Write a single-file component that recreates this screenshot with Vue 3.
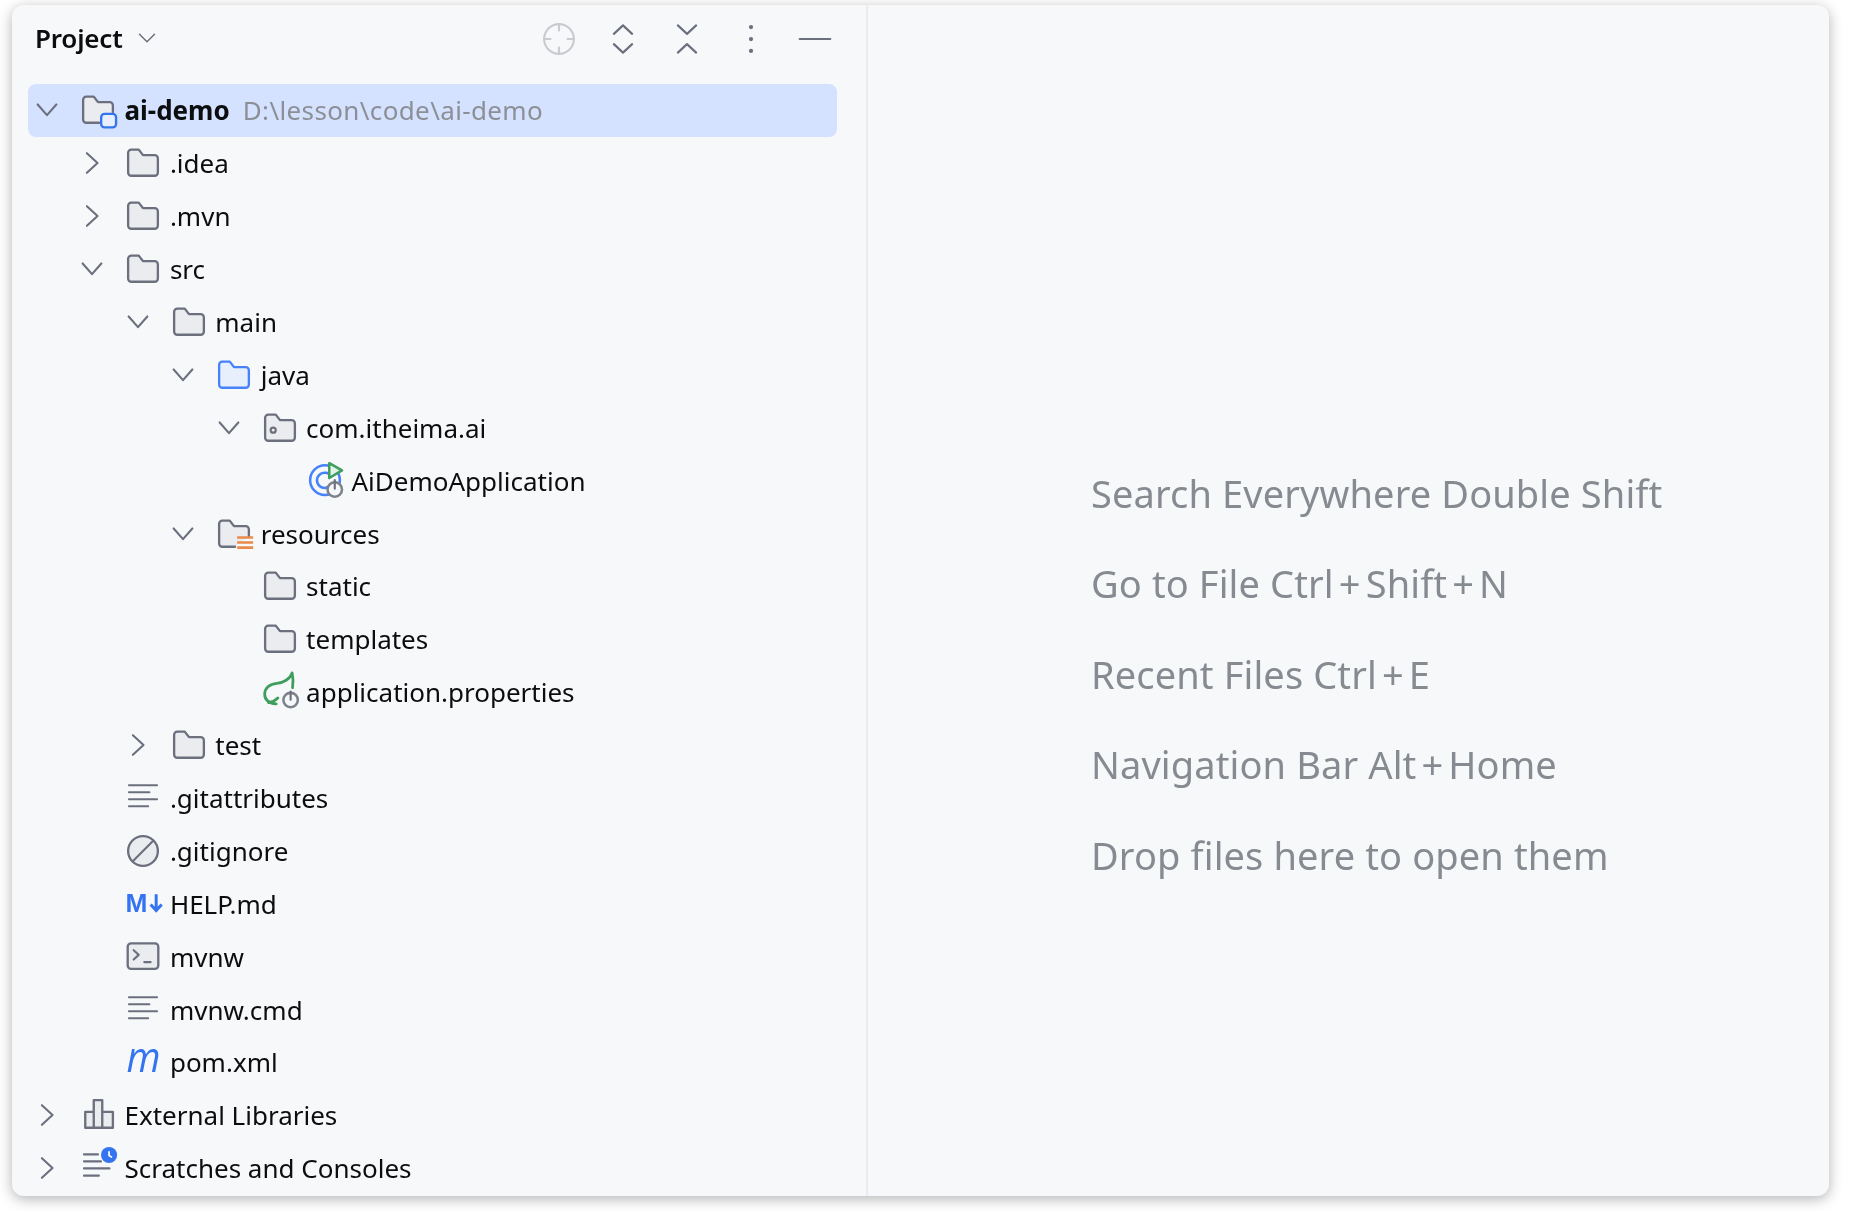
<script setup>
const rows = [
  { label: 'ai-demo', hint: 'D:\\lesson\\code\\ai-demo', depth: 0, open: true, icon: 'root', selected: true },
  { label: '.idea', depth: 1, open: false, icon: 'folder' },
  { label: '.mvn', depth: 1, open: false, icon: 'folder' },
  { label: 'src', depth: 1, open: true, icon: 'folder' },
  { label: 'main', depth: 2, open: true, icon: 'folder' },
  { label: 'java', depth: 3, open: true, icon: 'source' },
  { label: 'com.itheima.ai', depth: 4, open: true, icon: 'package' },
  { label: 'AiDemoApplication', depth: 5, icon: 'spring' },
  { label: 'resources', depth: 3, open: true, icon: 'resources' },
  { label: 'static', depth: 4, icon: 'folder' },
  { label: 'templates', depth: 4, icon: 'folder' },
  { label: 'application.properties', depth: 4, icon: 'leaf' },
  { label: 'test', depth: 2, open: false, icon: 'folder' },
  { label: '.gitattributes', depth: 1, icon: 'lines' },
  { label: '.gitignore', depth: 1, icon: 'ignore' },
  { label: 'HELP.md', depth: 1, icon: 'markdown' },
  { label: 'mvnw', depth: 1, icon: 'terminal' },
  { label: 'mvnw.cmd', depth: 1, icon: 'lines' },
  { label: 'pom.xml', depth: 1, icon: 'maven' },
  { label: 'External Libraries', depth: 0, open: false, icon: 'libraries' },
  { label: 'Scratches and Consoles', depth: 0, open: false, icon: 'scratches' },
];

const hints = [
  ['Search Everywhere Double Shift'],
  ['Go to File Ctrl', 'Shift', 'N'],
  ['Recent Files Ctrl', 'E'],
  ['Navigation Bar Alt', 'Home'],
  ['Drop files here to open them'],
];

const FOLDER = 'M1 3.2A1.5 1.5 0 0 1 2.5 1.7H6l2 2.6h5.5A1.5 1.5 0 0 1 15 5.8v6.7a1.5 1.5 0 0 1-1.5 1.5h-11A1.5 1.5 0 0 1 1 12.5z';
const FOLDER_CUT = 'M8.5 14h-6A1.5 1.5 0 0 1 1 12.5V3.2a1.5 1.5 0 0 1 1.5-1.5H6l2 2.6h5.5A1.5 1.5 0 0 1 15 5.8V9';
</script>

<template>
  <div class="page">
    <div class="window">
      <aside class="panel">
        <header class="panel__head">
          <div class="panel__title">
            <span>Project</span>
            <svg class="chevron-small" viewBox="0 0 16 16">
              <polyline class="line" points="3,5.5 8,10.5 13,5.5" />
            </svg>
          </div>
          <div class="panel__tools">
            <svg class="icon" viewBox="0 0 16 16">
              <circle class="line line--off" cx="8" cy="8" r="7" />
              <path class="line line--off" d="M8 1v3M8 12v3M1 8h3M12 8h3" />
            </svg>
            <svg class="icon" viewBox="0 0 16 16">
              <path class="line" d="M3.7 5.6 8 1.6l4.3 4M3.7 10.4 8 14.4l4.3-4" />
            </svg>
            <svg class="icon" viewBox="0 0 16 16">
              <path class="line" d="M3.7 1.6 8 5.6l4.3-4M3.7 14.4 8 10.4l4.3 4" />
            </svg>
            <svg class="icon" viewBox="0 0 16 16">
              <circle class="dot" cx="8" cy="2.4" r="1" />
              <circle class="dot" cx="8" cy="8" r="1" />
              <circle class="dot" cx="8" cy="13.6" r="1" />
            </svg>
            <svg class="icon" viewBox="0 0 16 16">
              <path class="line" d="M.8 8h14.4" />
            </svg>
          </div>
        </header>

        <div class="tree">
          <div
            v-for="row in rows"
            :key="row.label"
            class="row"
            :class="{ 'row--selected': row.selected }"
            :style="{ paddingLeft: row.depth * 45.4 + 'px' }"
          >
            <span class="row__toggle">
              <svg v-if="row.open === true" class="icon" viewBox="0 0 16 16">
                <polyline class="line" points="3.6,5.4 8,10.4 12.4,5.4" />
              </svg>
              <svg v-else-if="row.open === false" class="icon" viewBox="0 0 16 16">
                <polyline class="line" points="5.6,3.4 10.6,8 5.6,12.6" />
              </svg>
            </span>

            <svg class="icon row__icon" viewBox="0 0 16 16">
              <path v-if="row.icon === 'folder'" class="shape" :d="FOLDER" />

              <template v-else-if="row.icon === 'root'">
                <path class="shape" :d="FOLDER_CUT" />
                <rect class="blue-box" x="9.5" y="9.8" width="7" height="6.4" rx="1.6" />
              </template>

              <path v-else-if="row.icon === 'source'" class="shape shape--blue" :d="FOLDER" />

              <template v-else-if="row.icon === 'package'">
                <path class="shape" :d="FOLDER" />
                <circle class="line" cx="4.8" cy="9" r="1.2" />
              </template>

              <template v-else-if="row.icon === 'resources'">
                <path class="shape" :d="FOLDER_CUT" />
                <path class="orange" d="M9.5 9.6H17M9.5 12H17M9.5 14.4H17" />
              </template>

              <template v-else-if="row.icon === 'spring'">
                <circle class="ring" cx="8" cy="7.6" r="7" />
                <path class="ring" d="M11 6a3.6 3.6 0 1 0 0 3.4" />
                <path class="play" d="M10 -.4 16 3l-6 3.6z" />
                <circle class="power" cx="12.6" cy="12" r="3.4" />
                <path class="line" d="M12.6 7.6v4" />
              </template>

              <template v-else-if="row.icon === 'leaf'">
                <path class="leaf" d="M13.7-1C12.8 2 9.5 3.6 6.5 3.9 3 4.2.8 6.3.8 9c0 2.8 2 4.2 5.4 4.6M13.7-1c.5 2.2.6 4.6.2 7M2.6 13c1.8-.3 3.2-1 4.4-2.2" />
                <circle class="power" cx="13" cy="11.8" r="3.4" />
                <path class="line" d="M13 7.8v3.8" />
              </template>

              <path v-else-if="row.icon === 'lines'" class="line" d="M1.4 2h13.2M1.4 5.3h9.6M1.4 8.6h13.2M1.4 11.9h9" />

              <template v-else-if="row.icon === 'ignore'">
                <circle class="shape" cx="8" cy="8" r="7" />
                <path class="line" d="M3.2 12.8 12.8 3.2" />
              </template>

              <template v-else-if="row.icon === 'markdown'">
                <text class="md-text" x="-.3" y="11.8">M</text>
                <path class="md-arrow" d="M14.2 3.4v7.6M11.6 8.2l2.6 2.9 2.6-2.9" />
              </template>

              <template v-else-if="row.icon === 'terminal'">
                <rect class="shape" x=".8" y="1.6" width="14.4" height="12" rx="1.6" />
                <path class="line" d="M3.6 4.8 6 7 3.6 9.2M8.6 10.4h3" />
              </template>

              <text v-else-if="row.icon === 'maven'" class="maven" x=".2" y="12.8" textLength="16" lengthAdjust="spacingAndGlyphs">m</text>

              <path v-else-if="row.icon === 'libraries'" class="shape" d="M2 6.5h4V14H2zM6 1h4v13H6zM10 6.5h5V14h-5z" />

              <template v-else-if="row.icon === 'scratches'">
                <path class="line" d="M1.4 1.6h6.6M1.4 4.9h8M1.4 8.2h12M1.4 11.6h7" />
                <circle class="clock" cx="13.2" cy="1.9" r="3.8" />
                <path class="clock-hand" d="M13.2 .1v2l1.4 .9" />
              </template>
            </svg>

            <span class="row__label">{{ row.label }}</span>
            <span v-if="row.hint" class="row__hint">{{ row.hint }}</span>
          </div>
        </div>
      </aside>

      <main class="empty">
        <p v-for="parts in hints" :key="parts[0]" class="empty__line">
          <template v-for="(part, i) in parts" :key="part">
            <span v-if="i > 0" class="empty__plus">+</span>{{ part }}
          </template>
        </p>
      </main>
    </div>
  </div>
</template>

<style>
html,
body {
  margin: 0;
  background: #fff;
}
</style>

<style scoped>
.page {
  height: 1212px;
  padding: 5px 20px 16px 12px;
  box-sizing: border-box;
  font-family: "Noto Sans", sans-serif;
  color: #0c0d0f;
  overflow: hidden;
}

.window {
  height: 100%;
  display: flex;
  border-radius: 12px;
  background: #f7f8fa;
  box-shadow: 0 3px 14px rgba(0, 0, 0, 0.3);
  overflow: hidden;
  filter: blur(0.4px);
}

.panel {
  width: 856px;
  flex-shrink: 0;
  box-sizing: border-box;
  padding: 0 29px 0 16px;
  border-right: 2px solid #ebecf0;
}

.panel__head {
  height: 66px;
  margin-bottom: 13px;
  padding: 0 0 0 7px;
  display: flex;
  justify-content: space-between;
  align-items: center;
}

.panel__title {
  display: flex;
  align-items: center;
  gap: 12px;
  font-size: 26px;
  font-weight: 600;
  letter-spacing: -0.2px;
}

.chevron-small {
  width: 24px;
  height: 24px;
}

.panel__tools {
  display: flex;
  align-items: center;
  gap: 30px;
  margin-right: 5px;
  padding-top: 2px;
}

.tree {
  display: flex;
  flex-direction: column;
}

.row {
  height: 52.9px;
  display: flex;
  align-items: center;
  border-radius: 8px;
  white-space: nowrap;
}

.row--selected {
  background: #d4e2ff;
}

.row__toggle {
  width: 38px;
  height: 34px;
  margin-left: 2px;
  margin-right: 13px;
  flex-shrink: 0;
}

.row__icon {
  margin-right: 9.5px;
  flex-shrink: 0;
}

.row__label {
  font-size: 26px;
}

.row--selected .row__label {
  font-weight: 700;
}

.row__hint {
  margin-left: 13px;
  font-size: 26px;
  letter-spacing: 0.37px;
  color: #8c8f96;
}

.icon {
  display: block;
  width: 34px;
  height: 34px;
  overflow: visible;
}

.line {
  fill: none;
  stroke: #6c707e;
  stroke-width: 1;
  stroke-linecap: round;
  stroke-linejoin: round;
}

.line--off {
  stroke: #c9cbd0;
}

.dot {
  fill: #6c707e;
}

.shape {
  fill: #ebecf0;
  stroke: #6c707e;
  stroke-width: 1.1;
  stroke-linejoin: round;
  stroke-linecap: round;
}

.shape--blue {
  fill: #e7effd;
  stroke: #4682fa;
}

.blue-box {
  fill: #e7effd;
  stroke: #3574f0;
  stroke-width: 1.1;
}

.orange {
  fill: none;
  stroke: #ea8a4a;
  stroke-width: 1.2;
}

.ring {
  fill: none;
  stroke: #4682fa;
  stroke-width: 1.2;
}

.play {
  fill: #e4f3e8;
  stroke: #3f9d5d;
  stroke-width: 1.2;
  stroke-linejoin: round;
}

.power {
  fill: #f7f8fa;
  stroke: #7e828c;
  stroke-width: 1.2;
}

.leaf {
  fill: none;
  stroke: #3f9d5d;
  stroke-width: 1.3;
  stroke-linecap: round;
  stroke-linejoin: round;
}

.md-text {
  fill: #3574f0;
  font-family: "Liberation Sans", sans-serif;
  font-size: 12.4px;
  font-weight: 700;
}

.md-arrow {
  fill: none;
  stroke: #3574f0;
  stroke-width: 1.4;
}

.maven {
  fill: #3574f0;
  font-family: "Open Sans", sans-serif;
  font-size: 20px;
  font-style: italic;
  font-weight: 400;
}

.clock {
  fill: #3574f0;
}

.clock-hand {
  fill: none;
  stroke: #fff;
  stroke-width: 0.8;
}

.empty {
  flex: 1;
  padding: 147px 0 0 223px;
  display: flex;
  flex-direction: column;
  justify-content: center;
}

.empty__line {
  margin: 0;
  height: 90.5px;
  line-height: 90.5px;
  font-size: 38px;
  letter-spacing: 0.12px;
  color: #868a91;
}

.empty__plus {
  margin: 0 5px;
}
</style>
